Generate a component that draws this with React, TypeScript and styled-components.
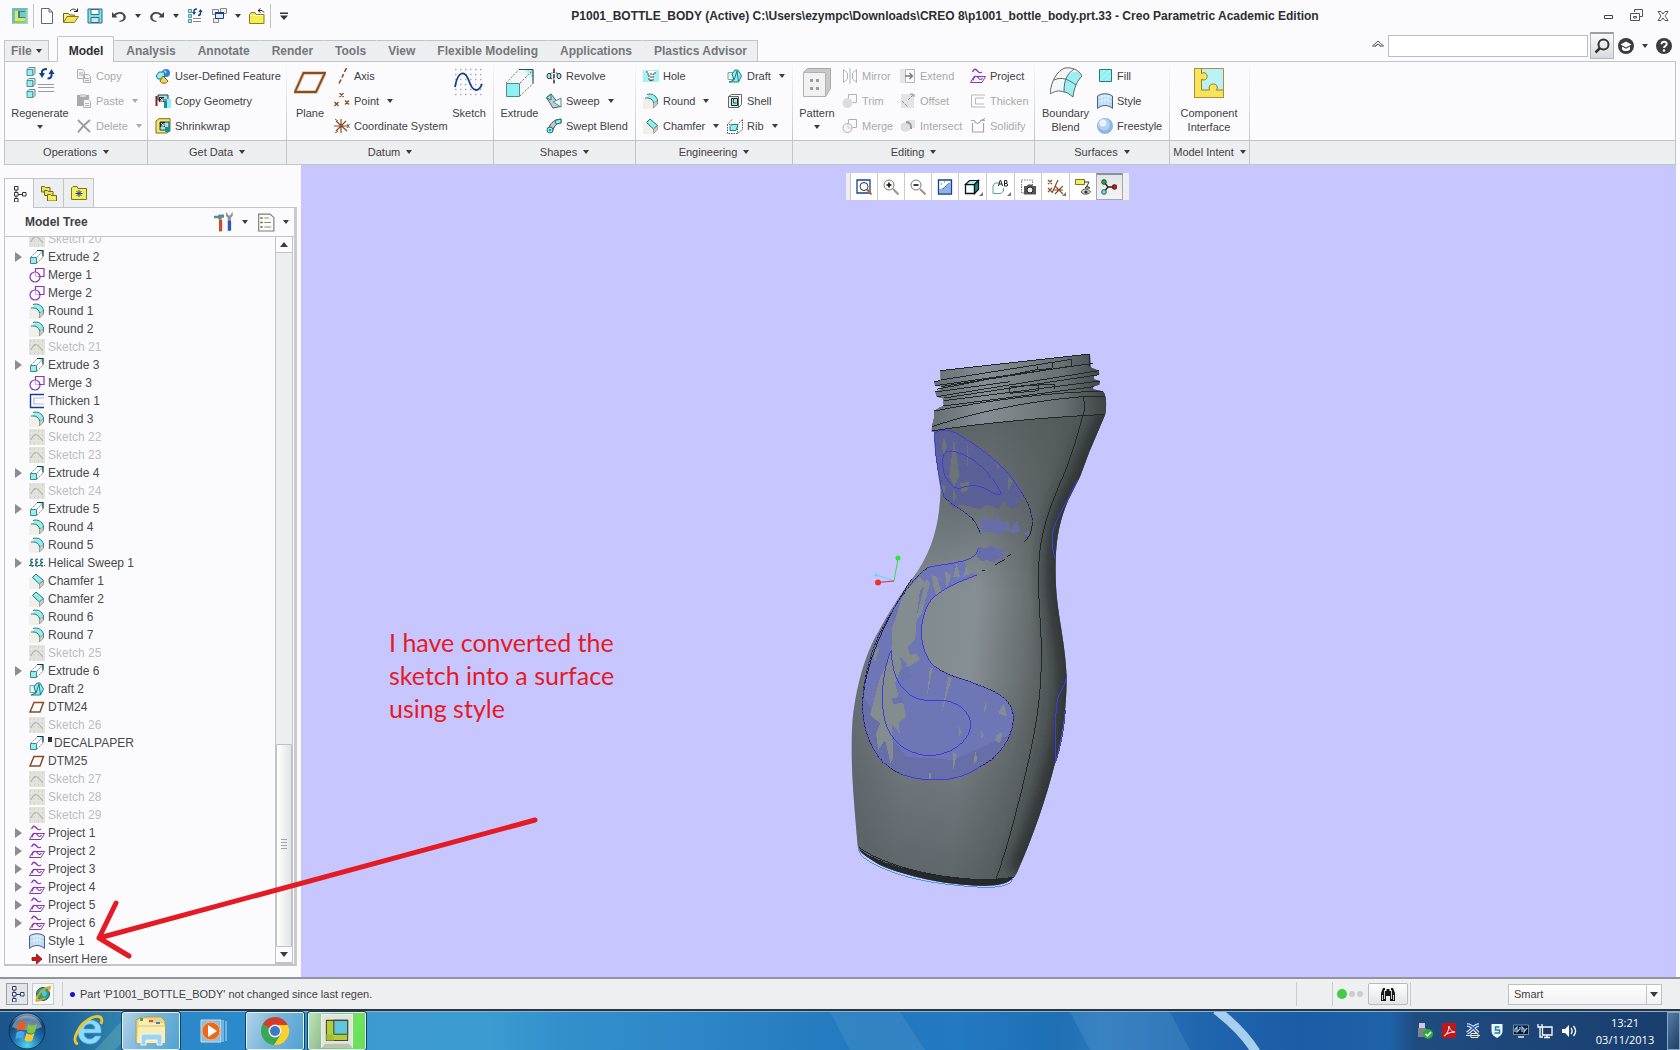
import React from "react";
import styled, { createGlobalStyle, css } from "styled-components";

const color = {
  chrome: "#fbfbfe",
  bar: "#edeef0",
  line: "#c3c4c9",
  text: "#3f4044",
  soft: "#74767b",
  off: "#a8a9ab",
  canvas: "#c8c6ff",
  note: "#e41b24",
};

const Global = createGlobalStyle`
  *, *::before, *::after { box-sizing: border-box; }
  html, body, #root { height: 100%; margin: 0; }
  body { font-family: "Liberation Sans", Arial, sans-serif; font-size: 11px; color: ${color.text}; background: ${color.chrome}; overflow: hidden; }
  button, input, select { font: inherit; color: inherit; margin: 0; padding: 0; border: 0; background: none; }
  svg { display: block; flex: none; }
  ul { list-style: none; margin: 0; padding: 0; }
`;

/* ---------- icon drawings, 16 x 16 unless noted ---------- */

const AQUA = "#8ff0f4";
const TEAL = "#1b7f80";
const BROWN = "#8a4b22";
const PURPLE = "#8b35b5";
const NAVY = "#14418c";

const icons: Record<string, React.ReactNode> = {
  creo: (
    <>
      <path d="M0 0h16v16H0z" fill="#9fd0e6" />
      <path d="M1 1h13v14H1z" fill="#8bcf5a" />
      <path d="M0 0h16L14 2H2v12L0 16z" fill="#6fb6d8" />
      <path d="M3 3h10v10H3z" fill="#d9e86a" />
      <path d="M6 3h7v7H6z" fill="#3f7f8f" />
      <path d="M8 4h5v5H8z" fill="#62cfe0" />
    </>
  ),
  page: <path d="M2.500 .500h7.500l3.500 3.500v11.500h-11zM10 .500v3.500h3.500" fill="#fff" stroke="#666" />,
  open: (
    <>
      <path d="M.500 14.500v-9h5l1 1.500h5v2" fill="#f5ee9a" stroke="#6c6420" />
      <path d="M.500 14.500 4 8.500h11.500l-4 6z" fill="#f3e45c" stroke="#8a7b22" />
      <path d="M7 3c2-2.500 5-2.500 7 0M14.500 .500V3.500H11" fill="none" stroke="#222" />
    </>
  ),
  save: (
    <>
      <path d="M1 1h14v14H1z" fill="#7be4e8" stroke="#2b6f86" />
      <path d="M4 1.500h8v5H4z" fill="#fff" stroke="#2b6f86" />
      <path d="M4 9.500h8v5H4z" fill="#d5e4e8" stroke="#2b6f86" />
    </>
  ),
  undo: <path d="M1 4v5.500h5.500L4.700 7.700C8 4 13 6 12.500 9.500c0 2-1.500 3-4 3.300V14c4-.3 6.300-2 6.300-4.700C14.800 4 7.500 2 3.200 6.200z" fill="#444549" />,
  redo: <path d="M15 4v5.500H9.500l1.800-1.800C8 4 3 6 3.500 9.500c0 2 1.500 3 4 3.300V14c-4-.3-6.300-2-6.300-4.700C1.200 4 8.500 2 12.800 6.200z" fill="#444549" />,
  regen: (
    <>
      <path d="M1.500 1.500h3v3h-3zM1.500 6.500h3v3h-3zM1.500 11.500h3v3h-3z" fill={AQUA} stroke="#58929a" />
      <path d="M6 10.500h8M6 13.500h8" stroke="#888" />
      <path d="M7 5V3c0-1 1-2 3-2M13.500 3v2c0 1.500-1 2.500-2.500 2.500" fill="none" stroke={NAVY} strokeWidth="1.500" />
      <path d="M5 4h4L7 7zM11.500 4h4l-2-3z" fill={NAVY} />
    </>
  ),
  windows: (
    <>
      <path d="M1.500 1.500h6v5h-6zM9.500 .500h6v5h-6zM2.500 10.500h5v4h-5z" fill="#eee" stroke="#888" />
      <path d="M4.500 4.500h8v6h-8z" fill="#dfeafc" stroke={NAVY} />
      <path d="M4 4h9v2H4z" fill={NAVY} />
    </>
  ),
  folderUp: (
    <>
      <path d="M.500 15.500v-9L2 4.500h4l1 2h8v9z" fill="#f6ee4e" stroke="#8a7f22" />
      <path d="M1.500 7.500h12" stroke="#fffbc0" />
      <path d="M9 2.500h4l2 2M11.500 .500 9 2.500l2.500 2" fill="none" stroke="#222" />
    </>
  ),
  more: <path d="M4 4.500h8v1.500H4zM4 7.500h8L8 12z" fill="#333" />,
  copy: <path d="M1.500 1.500h5l2 2v7h-7zM3 5h4M3 7h4M7.500 6.500h5l2 2v6h-7zM9 10.500h4M9 12.500h4" fill="#f4f4f4" stroke="#b0b0b0" />,
  paste: (
    <>
      <path d="M1 2h12v11H1z" fill="#a9a9a9" />
      <path d="M4 1h6v3H4z" fill="#d4d4d4" />
      <path d="M7.500 6.500h5l2 2v6h-7zM9 10.500h4M9 12.500h4" fill="#f4f4f4" stroke="#b0b0b0" />
    </>
  ),
  del: <path d="M2 2c3 3 8 8 12 12M14 2C9 6 5 10 2 14.500" fill="none" stroke="#9b9b9d" strokeWidth="1.800" />,
  udf: (
    <>
      <circle cx="11" cy="5" r="4" fill="#2f7fe0" />
      <circle cx="10" cy="4" r="1.500" fill="#a8d0ff" />
      <path d="M1 8 4 4h5l1 4-3 3H3z" fill={AQUA} stroke="#23707a" />
      <path d="m8 8 5 5c-1 3-7 3-8 0z" fill="#f2d35a" stroke="#7a6420" />
    </>
  ),
  copyGeom: (
    <>
      <path d="M1.500 3v10" stroke="#8b1f1f" strokeWidth="2" />
      <path d="M3 2h10v5H3z" fill={AQUA} stroke="#333" />
      <path d="M4 4h5v5H4z" fill="#222" />
      <path d="M5 5l3 3M8 5v3H5" stroke="#fff" fill="none" />
      <path d="M9 8h3v7H9z" fill="#1b8f95" />
      <path d="M12 6h4v9h-4z" fill={AQUA} />
    </>
  ),
  shrink: (
    <>
      <path d="M1 3 4 .700h11v12L12 15H1z" fill="#f3e86c" stroke="#7a6d1c" />
      <path d="M5 4h9v8H5z" fill={AQUA} stroke="#333" />
      <path d="M5 4h5v5H5z" fill="#222" />
      <path d="M6 5l3 3M9 5v3H6" stroke="#fff" fill="none" />
      <path d="M10 9h5v5h-5z" fill="#159097" />
    </>
  ),
  axis: <path d="M12.500 0 10.500 4M9.500 6 8 9.500M7 11.500 5 15.500" stroke={BROWN} strokeWidth="1.600" />,
  point: <path d="M5.500 0l4 4M9.500 0l-4 4M.500 9l4 4M4.500 9l-4 4M11 7.500l4 4M15 7.500l-4 4" stroke={BROWN} strokeWidth="1.300" />,
  csys: (
    <>
      <path d="M0 8h14M7 1v14M2 3l11 10M12 3 2 13" stroke={BROWN} strokeWidth="1.200" />
      <path d="M1 1l3 2M1 15l3-2M13 6l2.500 4M15.500 6 13 10" stroke="#666" />
    </>
  ),
  revolve: (
    <>
      <path d="M8 .500v15" stroke="#111" strokeWidth="1.300" strokeDasharray="4 1.500" />
      <ellipse cx="3" cy="8" rx="2" ry="2.700" fill={AQUA} stroke="#333" />
      <ellipse cx="13" cy="8" rx="2" ry="2.700" fill={AQUA} stroke="#333" />
      <path d="M4 6c2-2 6-2 8 0M4 10c2 1 3 1 4 0" fill="none" stroke="#333" strokeDasharray="2 1" />
    </>
  ),
  sweep: (
    <>
      <path d="M.500 4.500 5 1l10 12.500-8 1.500z" fill="#c7ced2" stroke="#555" />
      <path d="M.500 5 5 1v6z" fill={AQUA} stroke={TEAL} />
      <path d="M7 9 15 5v9z" fill="#e3f8f9" stroke="#4a8f95" />
    </>
  ),
  swept: (
    <>
      <path d="M2 12C4 6 6 4 10 2l5-1v4c-5 0-7 4-9 9z" fill="#bfc8cc" stroke="#444" />
      <path d="M9 2.500 15 1v4l-5 1z" fill={AQUA} stroke={TEAL} />
      <circle cx="4" cy="12" r="3" fill={AQUA} stroke="#1a6f70" />
      <circle cx="4" cy="12" r="1" fill="#1a6f70" />
    </>
  ),
  hole: (
    <>
      <path d="M0 2h16v12H0z" fill={AQUA} opacity=".8" />
      <path d="M3.500 3h9v3h-2.500v6H6V6H3.500z" fill="#fff" />
      <path d="M4 3v3h2v6.500h4V6h2V3M8 5v8" fill="none" stroke="#444" strokeDasharray="2 1" />
    </>
  ),
  round: (
    <>
      <path d="M0 5h6l5 5v6H0z" fill="#f0f0e8" />
      <path d="M5 2c4-1 8 1 9.500 5v4.500L10.500 15V9.500C9.500 7 8 5.500 4 5z" fill={AQUA} />
      <path d="M4 1.500c5-1.500 9 1 10.500 5.500v4M2 5c5-.5 8 1.500 8.500 5" fill="none" stroke="#2d6d70" />
      <path d="m10.500 15 4-4V7.500l-4 3z" fill="#cfcdbd" stroke="#777" strokeWidth=".600" />
    </>
  ),
  chamfer: (
    <>
      <path d="M0 5h5l5 6v5H0z" fill="#f0f0e8" />
      <path d="M3.500 4.500 7 1l7.500 6.500-4 3.500z" fill={AQUA} stroke="#2d6d70" />
      <path d="m10.500 15.500 4-4v-4l-4 3.500z" fill="#cfcdbd" stroke="#777" strokeWidth=".600" />
    </>
  ),
  draft: (
    <>
      <path d="M1 4.500h6v7H1z" fill="#e9f4f2" stroke="#7aa" />
      <path d="M5 6 8 2h3l3.500 6-3 6H2l5-2z" fill={AQUA} stroke="#217a80" />
      <path d="m7 12 3-9 1.500 11" fill="none" stroke="#217a80" />
    </>
  ),
  shell: (
    <>
      <path d="M1.500 3.500h10v11h-10z" fill="#e8eceb" stroke="#666" />
      <path d="M1.500 3.500l3-2h10v10l-3 3" fill="none" stroke="#666" />
      <path d="M4.500 5.500h6v7h-6z" fill={AQUA} stroke="#222" />
      <path d="M6.500 6v4h3" fill="none" stroke="#444" />
    </>
  ),
  rib: (
    <>
      <path d="M.500 6.500v9h10v-9zM.500 6.500 5 1.500M10.500 15.500l5-4v-10l-5 5" fill="none" stroke="#555" strokeDasharray="1.500 1" />
      <path d="M3 8.500l2-2h6l-2 6H3z" fill={AQUA} stroke="#217a80" />
    </>
  ),
  mirror: <path d="M8 0v16M1.500 1.500 5.500 5v6l-4 3.500zM14.500 1.500l-4 3.500v6l4 3.500z" fill="none" stroke="#b5b5b5" />,
  trim: (
    <>
      <path d="M6.500 1.500h8v8h-4M6.500 5V1.500" fill="none" stroke="#b5b5b5" />
      <circle cx="5.500" cy="10" r="5" fill="#dcdcdc" />
    </>
  ),
  mergeOff: (
    <>
      <path d="M6.500 1.500h8v8h-4M6.500 5V1.500" fill="none" stroke="#b0b0b0" />
      <circle cx="5.500" cy="10" r="4.500" fill="#f6f6f6" stroke="#b0b0b0" />
      <path d="M6 6v4h4" fill="none" stroke="#d0d0d0" />
    </>
  ),
  extend: (
    <>
      <path d="M0 1h5v14H0z" fill="#e6e6e6" />
      <path d="M5.500 1.500h9v13h-9z" fill="none" stroke="#b5b5b5" />
      <path d="M5 8h7M9.500 5l3 3-3 3" fill="none" stroke="#777" strokeWidth="1.300" />
    </>
  ),
  offset: (
    <>
      <path d="M1 1h13v14H1z" fill="#e3e3e3" />
      <path d="M2 8 8 14M8 7l6-6M10 1h4v4" fill="none" stroke="#8c8c8c" strokeDasharray="3 1" />
    </>
  ),
  intersect: (
    <>
      <path d="M7 2h8v8H7z" fill="#e3e3e3" />
      <circle cx="5.500" cy="9" r="5" fill="#dedede" />
      <path d="M6 4c4 0 5.500 3 5 7" fill="none" stroke="#999" strokeWidth="2" />
    </>
  ),
  project: (
    <>
      <path d="M2.500 4C4 .500 5.500 .500 7.500 3s3 2 4.500 1" fill="none" stroke={PURPLE} strokeWidth="1.300" />
      <path d="M4 8.500h11.500l-3.500 6H.500z" fill="none" stroke={PURPLE} />
      <path d="M3 12.500c1-5 4-5 5.500-2.500s3 1.500 4 0" fill="none" stroke={PURPLE} strokeWidth="1.200" />
    </>
  ),
  thickenOff: <path d="M15 2H1.500v12H15M14 5H5.500v6H14" fill="none" stroke="#b9b9b9" />,
  solidify: <path d="M1 2.500h3c2 4 5 4 7 0h4M11 2.500 15 .500M2.500 5v9h11V5" fill="none" stroke="#a5a5a5" strokeWidth="1.200" />,
  fill: (
    <>
      <path d="M2.500 1.500h12v12h-12z" fill={AQUA} stroke="#1e7e84" />
      <path d="M3 7l5-5M3 12 13 3M8 13l6-6" stroke="#d8fbfb" />
    </>
  ),
  style: (
    <>
      <path d="M1 3c4-3 9-3 14 0v12.500C11 11.500 5 11.500 1 15.500z" fill="#b7d9f5" />
      <path d="M5 1.500v10.800M8 1v11M11 1.500v11M2 5c4-3 8-3 12 0M2 9c4-3 8-3 12 0" stroke="#e6f3fd" fill="none" />
      <path d="M.500 3v12.500M15.500 3v12.500M.500 15.500c4-4 11-4 15 0M.500 3c4-3 11-3 15 0" fill="none" stroke="#4b6078" />
    </>
  ),
  freestyle: (
    <>
      <circle cx="8" cy="8" r="8" fill="#8db6e2" />
      <circle cx="7" cy="6.500" r="6" fill="#b4d1f0" />
      <circle cx="6" cy="5" r="3.500" fill="#e7f2fc" />
    </>
  ),
  extrudeSmall: (
    <>
      <path d="M1.500 8.500h6v6h-6z" fill={AQUA} stroke="#4b8388" />
      <path d="M2 8 8.500 1.500M8 8l6-6M8 14l6.500-6.500" fill="none" stroke="#8b8f92" strokeDasharray="2 1" />
      <path d="m10.500 2.500 3.500-.5v4z" fill="#8fdfe3" />
      <path d="M8 1.500h6v6" fill="none" stroke="#12393b" strokeWidth="1.200" />
    </>
  ),
  merge: (
    <>
      <path d="M6.500 5V1.500h8.500v8h-5" fill="none" stroke={PURPLE} strokeWidth="1.200" />
      <circle cx="6" cy="10" r="5" fill="none" stroke={PURPLE} strokeWidth="1.200" />
      <path d="M6.500 6v3.500H10" fill="none" stroke="#d2a9e6" />
    </>
  ),
  sketchOff: (
    <>
      <path d="M0 0h16v16H0z" fill="#e3e3dd" />
      <path d="M1 2h14M1 6h14M1 10h14M1 14h14" stroke="#c4c4bd" strokeDasharray="1 3" />
      <path d="M2 11c2-5 4-6 6-5 3 1 4 5 6 6" fill="none" stroke="#b4b4ac" strokeWidth="1.200" />
    </>
  ),
  thicken: (
    <>
      <path d="M15 1.500H1.500v13H15" fill="none" stroke={NAVY} strokeWidth="1.400" />
      <path d="M15 5H5v6h10" fill="none" stroke="#b9b5ee" strokeWidth="1.200" />
    </>
  ),
  helical: (
    <>
      <path d="M0 10.500h16" stroke="#176b66" strokeDasharray="2 1" />
      <path d="M4 4.500C1 3 1 8 4 7.500M4 7.500C1 7 1 12 4 11M9 4.500C6 3 6 8 9 7.500M9 7.500C6 7 6 12 9 11M14 4.500C11 3 11 8 14 7.500M14 7.500c-3-.5-3 4.500 0 3.500" fill="none" stroke="#176b66" strokeWidth="1.300" />
    </>
  ),
  datum: <path d="M5 3.500h9.500L11 13H1z" fill="none" stroke={BROWN} strokeWidth="1.500" />,
  insert: <path d="M3 6.500h4.500V3L13 8l-5.500 5V9.500H3z" fill="#d61616" stroke="#7e0d0d" strokeWidth=".800" />,
  treeTab: <path d="M3.500 .500h3.500v3.500H3.500zM3.500 6.500h3.500V10H3.500zM3.500 12.500h3.500V16H3.500zM11.500 6.500H15V10h-3.500zM5 4v2.500M5 10v2.500M7 8.500h4.500" fill="#fff" stroke="#333" />,
  layers: (
    <>
      <path d="M.500 7V1.500h3l1 1H9V7z" fill="#ece35c" stroke="#6f6821" />
      <path d="M3.500 10.500V5.500h3l1 1H12v4z" fill="#ece35c" stroke="#6f6821" />
      <path d="M6.500 16V9.500h3l1 1h5V16z" fill="#f7ef5a" stroke="#6f6821" />
    </>
  ),
  favs: (
    <>
      <path d="M.500 14.500V3l1.500-1.500h4l1 2h8.500v11z" fill="#f7ef5a" stroke="#7d7524" />
      <path d="M8 5v7M4.500 8.500h7M5.500 6l5 5M10.500 6l-5 5" stroke="#1f3f9b" />
    </>
  ),
  tools: (
    <>
      <path d="M0 3h3l1-1h4v2.500H6V6H3.500V5L0 5z" fill="#5d8a90" />
      <path d="M4 6h2.500v9.500H4z" fill="#d7491f" />
      <path d="M9.500 0v3l1.500 1.500v3h2.500v-3L15 3V0l-1.500 1.500v1h-2.500v-1z" fill="#8a9499" />
      <path d="M11 7h2.700v8H11z" fill="#2a5bb8" />
    </>
  ),
  listPage: (
    <>
      <path d="M1.500 .500h10l3.500 3v12H1.500z" fill="#fffef4" stroke="#777a7e" />
      <path d="M3 4h2M3 8h2M3 12h2" stroke="#555" strokeWidth="1.500" />
      <path d="M6.500 4h4M6.500 8h6M6.500 12h6" stroke="#888" />
    </>
  ),
  refit: (
    <>
      <path d="M1 1h13v13H1z" fill="#fff" stroke={NAVY} strokeWidth="1.300" />
      <circle cx="8" cy="7.500" r="4" fill="#f4fbff" stroke="#333" />
      <path d="m11 10.500 4.500 5" stroke="#a06a50" strokeWidth="2" />
    </>
  ),
  zoomIn: (
    <>
      <circle cx="6" cy="6" r="5" fill="#fff" stroke="#777" />
      <path d="M6 3.500v5M3.500 6h5" stroke="#111" strokeWidth="1.600" />
      <path d="m10 10 5.500 5.500" stroke="#b98b70" strokeWidth="2" />
    </>
  ),
  zoomOut: (
    <>
      <circle cx="6" cy="6" r="5" fill="#fff" stroke="#777" />
      <path d="M3.500 6h5" stroke="#111" strokeWidth="1.600" />
      <path d="m10 10 5.500 5.500" stroke="#b98b70" strokeWidth="2" />
    </>
  ),
  repaint: (
    <>
      <path d="M1.500 1h13v14h-13z" fill="#fff" stroke={NAVY} strokeWidth="1.300" />
      <path d="M2 14V10c5 0 8-4 12-8v12z" fill="#8fb1e6" />
      <path d="m6 10 6-6M4 5h1M7 3h1" stroke="#2c5dab" strokeDasharray="2 1" />
    </>
  ),
  cube: (
    <>
      <path d="M1.500 5.500h9v9h-9z" fill="#f4ffff" stroke="#111" strokeWidth="1.300" />
      <path d="m1.500 5.500 4-4h9l-4 4z" fill="#a5ebec" stroke="#111" strokeWidth="1.200" />
      <path d="m10.500 14.500 4-4v-9l-4 4z" fill="#1b8386" stroke="#111" strokeWidth="1.200" />
    </>
  ),
  views: (
    <>
      <path d="M1 14.500V7l2-3h4M1 14.500h8L11.500 12V9" fill="none" stroke="#4aaab0" />
      <path d="m6.500 7 1.500-5.500h.8L10.500 7M7 5h3M12.500 1.500V7h2.500l.7-1-.7-1.500h-2.500M12.500 1.500h2l.6 1.500-.6 1.500" fill="none" stroke="#222" />
    </>
  ),
  camera: (
    <>
      <path d="M1.500 1h11v13h-11z" fill="#fff" stroke="#777" strokeDasharray="1.500 1" />
      <path d="M4 7h3l1-1.500h4L13 7h3v8.500H4z" fill="#555" />
      <circle cx="10" cy="11" r="3" fill="#eee" stroke="#222" />
    </>
  ),
  datumDisp: (
    <path d="M1 1l4 4M5 1 1 5M11 1 5 14M1 9l4 4M5 9l-4 4M8 7l8 8M16 7l-8 8M7 11h9" fill="none" stroke={BROWN} strokeWidth="1.200" />
  ),
  annot: (
    <>
      <path d="M.500 .500h9v5h-9z" fill="#f5ee63" stroke="#7b751f" />
      <path d="M9 3h5l-2 4 3 2h-5l2-2" fill="none" stroke="#333" />
      <path d="M6 13c2-4 7-4 9.500 0-3 3-7 3-9.500 0z" fill="#c5ccd1" stroke="#555" />
      <circle cx="11" cy="13" r="1.600" fill="#333" />
    </>
  ),
  spin: (
    <>
      <path d="M3 3l4 5 7 0M7 8l-4 5" fill="none" stroke="#222" strokeWidth="1.300" />
      <circle cx="3" cy="3" r="2.400" fill="#14b32a" stroke="#111" strokeWidth=".600" />
      <circle cx="3" cy="13" r="2.400" fill="#57e0dc" stroke="#111" strokeWidth=".600" />
      <circle cx="13.500" cy="8" r="2.400" fill="#c41616" stroke="#111" strokeWidth=".600" />
    </>
  ),
  treeStatus: <path d="M3.500 .500H7V4H3.500zM3.500 6.500H7V10H3.500zM3.500 12.500H7V16H3.500zM11.500 6.500H15V10h-3.500zM5 4v2.500M5 10v2.500M7 8.500h4.500" fill="#fff" stroke="#223a66" />,
  globe: (
    <>
      <circle cx="8" cy="8" r="6.500" fill="#2fa06d" stroke="#135a8c" />
      <path d="M4 5c2 0 3 1 3 3s2 3 4 2l1-3-3-4z" fill="#4ec3ef" />
      <path d="M1 15C3 7 8 2 15 1c0 2-1 3-2 4M1 15c3 0 6-1 9-3" fill="none" stroke="#d9a520" strokeWidth="1.800" />
    </>
  ),
  binoculars: (
    <>
      <path d="M1 15V7l2-5h2v3h1.500V3h3v2H11V2h2l2 5v8h-5v-5H6v5z" fill="#161616" />
      <path d="M4.500 4v9M11.500 4v9M2.500 9v5M13.500 9v5" stroke="#e4e4e4" strokeWidth=".900" />
    </>
  ),
  minimize: <path d="M3.500 7.500h8v3h-8z" fill="#fff" stroke="#444" />,
  restore: <path d="M6.500 1.500h8v7h-3M6.500 4V1.500M2.500 5.500h9v7h-9zM5.500 8.500h3v1.500h-3z" fill="none" stroke="#555" />,
  close: <path d="M3 3.500h3l2 2.500 2-2.500h3L10 8l3 4.500h-3L8 10l-2 2.500H3L6 8z" fill="#fff" stroke="#555" />,
  collapse: <path d="M2.500 8 8 3l5.500 5h-3L8 6 5.500 8zM5 8.500 8 6l3 2.500" fill="#fff" stroke="#555" />,
  search: (
    <>
      <circle cx="9.500" cy="6.500" r="5" fill="none" stroke="#333" strokeWidth="2" />
      <path d="m6 10-4.500 4.500" stroke="#333" strokeWidth="2.500" />
    </>
  ),
  learn: (
    <>
      <circle cx="8" cy="8" r="8" fill="#3b3c40" />
      <path d="M2.500 6.500 8 3.500l5.500 3L8 9.500zM4 8.500v3c2 2 6 2 8 0v-3l-4 2.300z" fill="#fff" />
    </>
  ),
  help: (
    <>
      <circle cx="8" cy="8" r="8" fill="#3b3c40" />
      <path d="M5.500 6.200C5.500 2.800 11 3 10.700 6.200 10.600 8 8 8 8 10" fill="none" stroke="#fff" strokeWidth="2" />
      <circle cx="8" cy="12.500" r="1.300" fill="#fff" />
    </>
  ),
  usb: (
    <>
      <path d="M2 0h6v5H2z" fill="#c9ced4" />
      <path d="M1 5h8v9H1z" fill="#7c838c" />
      <circle cx="11" cy="11" r="5" fill="#2fa83c" />
      <path d="m8.500 11 2 2 3.500-4" fill="none" stroke="#fff" strokeWidth="1.500" />
    </>
  ),
  pdf: (
    <>
      <path d="M1 0h14v15H1z" fill="#c3161c" />
      <path d="M3 13c3-2 5-6 5-10 1 4 3 6 6 6-4 0-8 1-11 4z" fill="none" stroke="#fff" />
    </>
  ),
  xTray: (
    <>
      <path d="M2 2c5 0 7 4 11 8M14 2C9 2 8 7 2 10" fill="none" stroke="#eaf2ff" strokeWidth="3.500" />
      <path d="M2 2c5 0 7 4 11 8M14 2C9 2 8 7 2 10" fill="none" stroke="#2c5fb0" strokeWidth="1.500" />
      <path d="M1 12.500h14M6 10.500h7v4H6z" fill="#444" stroke="#e5e5e5" />
    </>
  ),
  shield: (
    <>
      <path d="M2.500 1h11v7c0 3-2 5-5.500 7-3.500-2-5.500-4-5.500-7z" fill="#eaf7fb" />
      <path d="M10.500 4h-4v3h4v3h-5" fill="none" stroke="#1b7fae" strokeWidth="1.500" />
    </>
  ),
  display: (
    <>
      <path d="M.500 2h15v9.500H.500z" fill="#10151d" stroke="#9fb4cf" strokeWidth=".700" />
      <path d="M2 9V6l2-2v5l3-3v-2M9 9V4l2 2v3l3-4" fill="none" stroke="#8cc4ff" strokeWidth="1.300" />
      <path d="M5 13h6v2H5z" fill="#b9c3d0" />
    </>
  ),
  network: (
    <>
      <path d="M5.500 4h9.500v8H5.500z" fill="#173a66" stroke="#fff" strokeWidth="1.300" />
      <path d="M7 14.500h6M10 12v2M1 1v3h4V1M3 4v10h3" fill="none" stroke="#fff" strokeWidth="1.300" />
    </>
  ),
  volume: (
    <>
      <path d="M1 6h3l4-4v12L4 10H1z" fill="#fff" />
      <path d="M10 5c1.500 2 1.500 4 0 6M12.500 3c2.500 3 2.500 7 0 10" fill="none" stroke="#fff" strokeWidth="1.300" />
    </>
  ),
};

const bigIcons: Record<string, React.ReactNode> = {
  regenerate: (
    <>
      {[0, 11, 22].map((y) => (
        <g key={y}>
          <path d={`M3 ${y + 2.5}h6v6H3z`} fill={AQUA} stroke="#5b8c90" />
          <path d={`M3 ${y + 2.5}l2-2h6v6l-2 2v-6z`} fill="#d9f3f4" stroke="#5b8c90" />
        </g>
      ))}
      <path d="M14 17.500h16M14 20.500h16M14 24.500h16" stroke="#9a9a9a" />
      <path d="M18 8V5c0-2 2-3 5-3M27.500 5v3c0 2-1.500 3.500-4 3.500" fill="none" stroke={NAVY} strokeWidth="2" />
      <path d="M15 6h6l-3 5zM24.500 7h6l-3-5z" fill={NAVY} />
    </>
  ),
  plane: (
    <>
      <path d="M9.500 6h21.500l-9 19H1z" fill="none" stroke="#d9c09a" strokeWidth="3.500" />
      <path d="M9.500 6h21.500l-9 19H1z" fill="none" stroke={BROWN} strokeWidth="1.800" />
    </>
  ),
  sketch: (
    <>
      {[2, 7, 12, 17, 22, 27].map((y) => (
        <path key={y} d={`M2 ${y + 0.5}h28`} stroke="#a8acb2" strokeWidth="1.500" strokeDasharray="1.500 3.500" />
      ))}
      <path d="M2 20C5 3 12 3 16 14c4 12 10 11 13 3" fill="none" stroke={NAVY} strokeWidth="1.800" />
    </>
  ),
  extrude: (
    <>
      <path d="M19 3h10v10z" fill="#9eeef0" />
      <path d="M15 3h8l6 8v6L16 29V16H3z" fill="#eef7f7" opacity=".6" />
      <path d="M2 16 15 2.500h14v14L16 29M16 16 29 3" fill="none" stroke="#777" strokeDasharray="2 1.500" />
      <path d="M15 2.500h14v14" fill="none" stroke="#444" />
      <path d="M2.500 16.500h13v13h-13z" fill={AQUA} stroke="#5a8487" />
    </>
  ),
  pattern: (
    <>
      <path d="m2.500 5.500 4-4h23v20l-5 8z" fill="#c9c9ca" stroke="#a8a8a8" />
      <path d="M2.500 5.500h22v24h-22z" fill="#f1f1f1" stroke="#b0b0b0" />
      <path d="M9 12h3v3H9zM15 12h3v3h-3zM9 20h3v3H9zM15 20h3v3h-3z" fill="#9c9c9c" />
    </>
  ),
  boundary: (
    <>
      <path d="M0 27C1 14 7 4 15 1h9c4 2 7 5 8 8-5 5-8 12-9 21-4-3-6-5-9-5-5-2-9-1-14 2z" fill="#f1f6f6" />
      <path d="M15 12c3-5 8-8 14-7l3 4c-5 5-8 12-9 21-4-3-6-5-9-5 0-5 0-9 1-13z" fill="#99eff1" />
      <path d="M0 27C1 14 7 4 15 1c7-1 14 2 17 8-5 5-8 12-9 21-4-3-6-5-9-5-5-2-9-1-14 2zM14 25c0-12 3-18 10-23M4 13c8-4 15 0 22 5" fill="none" stroke="#666" />
    </>
  ),
  component: (
    <>
      <path d="M1.500 1.500h29v29h-29z" fill="#b9f3f5" />
      <path d="M1.500 1.500h7v5c7-4 8 9 0 6V23h8c-3-8 11-8 7 0h7v7.500h-29z" fill="#f5e45c" stroke="#9a7a1c" />
      <path d="M1.500 1.500h29v29h-29z" fill="none" stroke="#b58d3a" />
    </>
  ),
};

const Icon = ({ name }: { name: string }) => (
  <svg width="16" height="16" viewBox="0 0 16 16" aria-hidden="true">
    {icons[name]}
  </svg>
);
const BigIcon = ({ name }: { name: string }) => (
  <svg width="32" height="32" viewBox="0 0 32 32" aria-hidden="true">
    {bigIcons[name]}
  </svg>
);

const Caret = styled.span<{ $off?: boolean }>`
  display: inline-block;
  flex: none;
  width: 0;
  height: 0;
  border: 3px solid transparent;
  border-top: 4px solid ${(p) => (p.$off ? color.off : "#3a3b3f")};
  border-bottom: 0;
`;

/* ---------- window chrome ---------- */

const Window = styled.div`
  display: flex;
  flex-direction: column;
  height: 100vh;
  position: relative;
`;
const TitleBar = styled.header`
  display: flex;
  align-items: center;
  height: 32px;
`;
const QuickBar = styled.div`
  display: flex;
  align-items: center;
  width: 296px;
  padding-left: 8px;
`;
const QuickButton = styled.button<{ $narrow?: boolean }>`
  display: flex;
  align-items: center;
  justify-content: center;
  width: ${(p) => (p.$narrow ? 14 : 24)}px;
  height: 24px;
`;
const QuickRule = styled.i`
  width: 1px;
  height: 24px;
  margin: 0 1px;
  background: ${color.line};
`;
const Title = styled.h1`
  flex: 1;
  margin: 0;
  text-align: center;
  font-size: 12px;
  font-weight: bold;
  color: #2c2d30;
  white-space: nowrap;
`;
const WindowButtons = styled.div`
  display: flex;
  gap: 11px;
  width: 86px;
  padding-left: 7px;
  button { width: 16px; }
`;
const TabRow = styled.nav`
  display: flex;
  align-items: flex-end;
  height: 29px;
  padding: 0 8px 0 4px;
`;
const Tab = styled.button<{ $active?: boolean }>`
  height: 21px;
  padding: 0 10px 0 11px;
  border: 1px solid ${color.line};
  border-bottom: 0;
  border-left-color: ${color.bar};
  border-right-width: 0;
  background: ${color.bar};
  font-size: 12px;
  font-weight: bold;
  color: ${color.soft};
  white-space: nowrap;
  &:last-of-type { border-right-width: 1px; }
  ${(p) =>
    p.$active &&
    css`
      height: 26px;
      margin-bottom: -1px;
      padding-top: 3px;
      border-left-color: ${color.line};
      border-right-width: 1px;
      border-radius: 2px 2px 0 0;
      background: ${color.chrome};
      color: #2f3033;
      position: relative;
    `}
`;
const FileTab = styled(Tab)`
  display: flex;
  align-items: center;
  gap: 4px;
  padding: 0 6px;
  margin-right: 8px;
  border-left-color: ${color.line};
  border-right-width: 1px;
`;
const Tabs = styled.div`
  display: flex;
  flex: 1;
  align-items: flex-end;
`;
const SearchArea = styled.form`
  display: flex;
  align-items: center;
  height: 27px;
  margin-bottom: 2px;
  gap: 2px;
`;
const SearchInput = styled.input`
  width: 200px;
  height: 22px;
  padding: 0 4px;
  border: 1px solid #bdbec3;
  background: #fff;
`;
const SearchButton = styled.button`
  display: flex;
  align-items: center;
  justify-content: center;
  width: 24px;
  height: 27px;
  margin-right: 2px;
  border: 1px solid #b4b5ba;
  border-top: 2px solid #9c9da3;
  background: linear-gradient(#fafafa, #d9dadf);
`;
const PlainButton = styled.button<{ $w?: number }>`
  display: flex;
  align-items: center;
  justify-content: center;
  width: ${(p) => p.$w ?? 16}px;
`;

/* ---------- ribbon ---------- */

const Ribbon = styled.section`
  display: flex;
  margin: 0 4px;
  height: 104px;
  border: 1px solid ${color.line};
  background: linear-gradient(${color.chrome} 78px, ${color.line} 78px, ${color.line} 79px, ${color.bar} 79px);
`;
const Group = styled.div<{ $w: number }>`
  display: flex;
  flex-direction: column;
  flex: none;
  width: ${(p) => p.$w}px;
  border-right: 1px solid;
  border-image: linear-gradient(${color.chrome}, ${color.line} 80%) 1;
`;
const GroupBody = styled.div`
  display: flex;
  height: 79px;
  padding: 1px 0 0 3px;
`;
const GroupLabel = styled.button`
  display: flex;
  flex: 1;
  align-items: center;
  justify-content: center;
  gap: 6px;
  padding-bottom: 2px;
  white-space: nowrap;
`;
const BigButton = styled.button<{ $w: number }>`
  display: flex;
  flex-direction: column;
  flex: none;
  align-items: center;
  width: ${(p) => p.$w}px;
  padding-top: 4px;
  line-height: 14px;
  span.label { margin-top: 7px; }
  i { margin-top: 5px; }
`;
const Column = styled.div<{ $w?: number }>`
  flex: none;
  width: ${(p) => (p.$w ? p.$w + "px" : "auto")};
  padding-left: 4px;
`;
const Command = styled.button`
  display: flex;
  align-items: center;
  gap: 4px;
  height: 25px;
  white-space: nowrap;
  &:disabled { color: ${color.off}; }
  i { margin-left: 4px; }
`;

type Cmd = { icon: string; label: string; menu?: boolean; off?: boolean };
type Part = { big: string; label: string[]; w: number; menu?: boolean } | { col: Cmd[]; w?: number };
type GroupSpec = { name: string; w: number; parts: Part[] };

const groups: GroupSpec[] = [
  {
    name: "Operations", w: 143,
    parts: [
      { big: "regenerate", label: ["Regenerate"], w: 64, menu: true },
      { col: [{ icon: "copy", label: "Copy", off: true }, { icon: "paste", label: "Paste", menu: true, off: true }, { icon: "del", label: "Delete", menu: true, off: true }] },
    ],
  },
  {
    name: "Get Data", w: 139,
    parts: [{ col: [{ icon: "udf", label: "User-Defined Feature" }, { icon: "copyGeom", label: "Copy Geometry" }, { icon: "shrink", label: "Shrinkwrap" }] }],
  },
  {
    name: "Datum", w: 207,
    parts: [
      { big: "plane", label: ["Plane"], w: 40 },
      { w: 118, col: [{ icon: "axis", label: "Axis" }, { icon: "point", label: "Point", menu: true }, { icon: "csys", label: "Coordinate System" }] },
      { big: "sketch", label: ["Sketch"], w: 42 },
    ],
  },
  {
    name: "Shapes", w: 142,
    parts: [
      { big: "extrude", label: ["Extrude"], w: 45 },
      { col: [{ icon: "revolve", label: "Revolve" }, { icon: "sweep", label: "Sweep", menu: true }, { icon: "swept", label: "Swept Blend" }] },
    ],
  },
  {
    name: "Engineering", w: 157,
    parts: [
      { w: 84, col: [{ icon: "hole", label: "Hole" }, { icon: "round", label: "Round", menu: true }, { icon: "chamfer", label: "Chamfer", menu: true }] },
      { col: [{ icon: "draft", label: "Draft", menu: true }, { icon: "shell", label: "Shell" }, { icon: "rib", label: "Rib", menu: true }] },
    ],
  },
  {
    name: "Editing", w: 242,
    parts: [
      { big: "pattern", label: ["Pattern"], w: 42, menu: true },
      { w: 58, col: [{ icon: "mirror", label: "Mirror", off: true }, { icon: "trim", label: "Trim", off: true }, { icon: "mergeOff", label: "Merge", off: true }] },
      { w: 70, col: [{ icon: "extend", label: "Extend", off: true }, { icon: "offset", label: "Offset", off: true }, { icon: "intersect", label: "Intersect", off: true }] },
      { col: [{ icon: "project", label: "Project" }, { icon: "thickenOff", label: "Thicken", off: true }, { icon: "solidify", label: "Solidify", off: true }] },
    ],
  },
  {
    name: "Surfaces", w: 135,
    parts: [
      { big: "boundary", label: ["Boundary", "Blend"], w: 55 },
      { col: [{ icon: "fill", label: "Fill" }, { icon: "style", label: "Style" }, { icon: "freestyle", label: "Freestyle" }] },
    ],
  },
  { name: "Model Intent", w: 80, parts: [{ big: "component", label: ["Component", "Interface"], w: 72 }] },
];

const RibbonGroup = ({ spec }: { spec: GroupSpec }) => (
  <Group $w={spec.w}>
    <GroupBody>
      {spec.parts.map((part, i) =>
        "big" in part ? (
          <BigButton key={i} $w={part.w}>
            <BigIcon name={part.big} />
            <span className="label">
              {part.label.map((l, n) => (
                <React.Fragment key={l}>
                  {n > 0 && <br />}
                  {l}
                </React.Fragment>
              ))}
            </span>
            {part.menu && <Caret as="i" />}
          </BigButton>
        ) : (
          <Column key={i} $w={part.w}>
            {part.col.map((c) => (
              <Command key={c.label} disabled={c.off}>
                <Icon name={c.icon} />
                {c.label}
                {c.menu && <Caret as="i" $off={c.off} />}
              </Command>
            ))}
          </Column>
        ),
      )}
    </GroupBody>
    <GroupLabel>
      {spec.name}
      <Caret />
    </GroupLabel>
  </Group>
);

/* ---------- model tree ---------- */

const Workspace = styled.main`
  display: flex;
  flex: 1;
  min-height: 0;
  padding-right: 4px;
`;
const Sidebar = styled.aside`
  display: flex;
  flex-direction: column;
  flex: none;
  width: 301px;
  padding: 13px 4px 11px 4px;
`;
const PanelTabs = styled.div`
  display: flex;
  height: 29px;
`;
const PanelTab = styled.button<{ $active?: boolean }>`
  display: flex;
  align-items: center;
  justify-content: center;
  width: 30px;
  height: ${(p) => (p.$active ? 30 : 29)}px;
  border: 1px solid ${color.line};
  border-left-width: ${(p) => (p.$active ? 1 : 0)}px;
  border-bottom: 0;
  background: ${(p) => (p.$active ? color.chrome : color.bar)};
  position: relative;
`;
const Panel = styled.section`
  display: flex;
  flex-direction: column;
  flex: 1;
  min-height: 0;
  border: 1px solid ${color.line};
  border-right: 3px solid #c9cacd;
  border-bottom-width: 2px;
`;
const PanelHead = styled.div`
  display: flex;
  align-items: center;
  height: 29px;
  padding-left: 20px;
  border-bottom: 1px solid ${color.line};
  h2 { flex: 1; margin: 0; font-size: 12px; }
`;
const TreeArea = styled.div`
  display: flex;
  flex: 1;
  min-height: 0;
`;
const TreeClip = styled.div`
  flex: 1;
  overflow: hidden;
`;
const TreeList = styled.ul`
  margin-top: -7px;
`;
const TreeRow = styled.li<{ $off?: boolean }>`
  display: flex;
  align-items: center;
  height: 18px;
  padding-left: 10px;
  font-size: 12px;
  white-space: nowrap;
  color: ${(p) => (p.$off ? "#bcbdbf" : "#47484c")};
  span { margin-left: 3px; }
`;
const Expander = styled.button<{ $open: boolean }>`
  width: 14px;
  height: 10px;
  &::before {
    content: "";
    display: ${(p) => (p.$open ? "block" : "none")};
    width: 0;
    border: 5px solid transparent;
    border-left: 7px solid #8b8c8f;
    border-right: 0;
  }
`;
const Marker = styled.i`
  align-self: flex-start;
  width: 4px;
  height: 5px;
  margin: 3px 0 0 3px;
  background: #333;
  & + span { margin-left: 2px; }
`;
const ScrollTrack = styled.div`
  display: flex;
  flex-direction: column;
  width: 18px;
  margin-right: 1px;
  border: 1px solid ${color.line};
  border-top: 0;
  background: ${color.bar};
`;
const ScrollButton = styled.button<{ $down?: boolean }>`
  display: flex;
  align-items: center;
  justify-content: center;
  height: 16px;
  border-bottom: 1px solid ${color.line};
  background: ${color.chrome};
  i { transform: ${(p) => (p.$down ? "none" : "rotate(180deg)")}; border-width: 5px 4px 0; }
`;
const ScrollThumb = styled.div`
  display: flex;
  align-items: center;
  justify-content: center;
  height: 28%;
  margin-top: auto;
  border: 1px solid #c0c1c6;
  border-radius: 1px;
  background: linear-gradient(90deg, #fff, #e2e3e7);
  i { width: 6px; height: 12px; background: repeating-linear-gradient(#a3a4aa 0 1px, transparent 1px 3px); }
`;

type Node = [icon: string, label: string];
const kinds: Record<string, string> = {
  Sketch: "sketchOff", Extrude: "extrudeSmall", Merge: "merge", Round: "round", Thicken: "thicken",
  Helical: "helical", Chamfer: "chamfer", Draft: "draft", DTM24: "datum", DTM25: "datum",
  DECALPAPER: "extrudeSmall", Project: "project", Style: "style", Insert: "insert",
};
const tree: Node[] = [
  "Sketch 20", "Extrude 2", "Merge 1", "Merge 2", "Round 1", "Round 2", "Sketch 21", "Extrude 3", "Merge 3",
  "Thicken 1", "Round 3", "Sketch 22", "Sketch 23", "Extrude 4", "Sketch 24", "Extrude 5", "Round 4", "Round 5",
  "Helical Sweep 1", "Chamfer 1", "Chamfer 2", "Round 6", "Round 7", "Sketch 25", "Extrude 6", "Draft 2", "DTM24",
  "Sketch 26", "DECALPAPER", "DTM25", "Sketch 27", "Sketch 28", "Sketch 29", "Project 1", "Project 2", "Project 3",
  "Project 4", "Project 5", "Project 6", "Style 1", "Insert Here",
].map((label) => [kinds[label.split(" ")[0]], label]);

const ModelTree = () => (
  <Sidebar>
    <PanelTabs>
      <PanelTab $active aria-label="Model Tree"><Icon name="treeTab" /></PanelTab>
      <PanelTab aria-label="Folder Browser"><Icon name="layers" /></PanelTab>
      <PanelTab aria-label="Favorites"><Icon name="favs" /></PanelTab>
    </PanelTabs>
    <Panel>
      <PanelHead>
        <h2>Model Tree</h2>
        <PlainButton $w={24} aria-label="Settings">
          <svg width="20" height="20" viewBox="0 0 16 16">{icons.tools}</svg>
        </PlainButton>
        <PlainButton $w={18} aria-label="Settings menu"><Caret /></PlainButton>
        <PlainButton $w={24} aria-label="Show">
          <svg width="18" height="19" viewBox="0 0 16 16">{icons.listPage}</svg>
        </PlainButton>
        <PlainButton aria-label="Show menu"><Caret /></PlainButton>
      </PanelHead>
      <TreeArea>
        <TreeClip>
          <TreeList>
            {tree.map(([icon, label]) => (
              <TreeRow key={label} $off={icon === "sketchOff"}>
                <Expander
                  $open={/^(Extrude|Helical|Project)/.test(label)}
                  aria-label={"Expand " + label}
                />
                <Icon name={icon} />
                {label === "DECALPAPER" && <Marker />}
                <span>{label}</span>
              </TreeRow>
            ))}
          </TreeList>
        </TreeClip>
        <ScrollTrack>
          <ScrollButton aria-label="Scroll up"><Caret as="i" /></ScrollButton>
          <ScrollThumb><i /></ScrollThumb>
          <ScrollButton $down aria-label="Scroll down"><Caret as="i" /></ScrollButton>
        </ScrollTrack>
      </TreeArea>
    </Panel>
  </Sidebar>
);

/* ---------- graphics area ---------- */

const Viewport = styled.section`
  display: flex;
  flex-direction: column;
  align-items: center;
  flex: 1;
  min-width: 0;
  padding-top: 8px;
  background: ${color.canvas};
  position: relative;
`;
const Scene = styled.svg`
  position: absolute;
  inset: 0;
  width: 100%;
  height: 100%;
`;
const ViewBar = styled.div`
  display: flex;
  height: 27px;
  padding: 0 6px 0 4px;
  background: ${color.bar};
  position: relative;
  margin-right: 3px;
`;
const ViewButton = styled.button<{ $on?: boolean; $menu?: boolean }>`
  display: flex;
  align-items: center;
  justify-content: center;
  width: ${(p) => (p.$menu ? 28 : 27)}px;
  border-left: 1px solid #c9cad0;
  background: #fff;
  position: relative;
  ${(p) =>
    p.$menu &&
    css`
      &::after {
        content: "";
        position: absolute;
        right: 3px;
        bottom: 4px;
        border: 2px solid #777;
        border-top-color: transparent;
        border-left-color: transparent;
      }
    `}
  ${(p) =>
    p.$on &&
    css`
      border: 1px solid #a7a8ad;
      border-top: 2px solid #8e8f95;
      background: linear-gradient(#e3e4e7, #f4f4f6);
    `}
`;
const Note = styled.p`
  position: absolute;
  left: 88px;
  top: 461px;
  width: 260px;
  margin: 0;
  font-family: Lato, "Open Sans", sans-serif;
  font-size: 25px;
  line-height: 33px;
  color: ${color.note};
`;
const Markup = styled.svg`
  position: absolute;
  left: 0;
  top: 0;
  width: 100%;
  height: 100%;
  pointer-events: none;
`;

const outline =
  "M360 122L810 72L812 112L836 122L838 132L822 138V148L840 153L838 164L818 170L820 178L848 184C858 190 862 225 855 255L808 365L780 440L745 510C715 580 705 640 707 740C709 850 735 920 740 1040C740 1160 720 1250 705 1300C680 1400 640 1520 590 1630C570 1668 520 1668 480 1667C380 1665 260 1640 180 1605C130 1575 115 1565 113 1545C100 1400 90 1280 97 1180C105 1080 135 970 175 905C205 850 240 795 275 748C335 670 358 590 362 480C350 400 342 350 342 305L335 305L336 288L342 265L343 243L360 232L372 228L368 204L350 200L346 186L362 178L365 170L345 165L342 156L362 150Z";
const rightEdge =
  "M870 230L808 365L780 440L745 510C715 580 705 640 707 740C709 850 735 920 740 1040C740 1160 720 1250 705 1300C680 1400 640 1520 590 1630";
const seam =
  "M790 200C796 230 794 245 788 258C760 360 740 420 720 460C670 580 655 640 655 760C658 850 664 900 664 970C664 1100 650 1200 600 1400C575 1500 550 1590 525 1655";
const upperDecal =
  "M345 310C355 298 385 298 410 310C470 345 530 390 570 435C585 452 600 475 610 495L592 530 570 535 552 512 535 538 520 530 500 524 480 538 450 530 425 522 400 535 372 500C350 420 343 350 345 310Z";
const lowerDecal =
  "M480 732C440 745 380 770 350 795C325 815 310 850 305 890C302 930 310 980 345 1010C390 1042 430 1045 480 1067C530 1085 578 1110 580 1160C580 1220 540 1280 480 1310C420 1355 330 1360 250 1335C180 1310 128 1230 128 1130C128 1060 145 980 180 910C210 850 270 750 320 715C360 705 400 702 430 692L450 730Z";

const Bottle = () => (
  <Scene viewBox="301 165 1375 812" role="img" aria-label="Bottle body model">
    <defs>
      <linearGradient id="skin" gradientUnits="userSpaceOnUse" x1="90" y1="800" x2="700" y2="860">
        <stop offset="0" stopColor="#62696e" />
        <stop offset=".35" stopColor="#808a8f" />
        <stop offset=".62" stopColor="#868f94" />
        <stop offset=".9" stopColor="#666c6f" />
        <stop offset="1" stopColor="#585e60" />
      </linearGradient>
      <linearGradient id="shoulder" gradientUnits="userSpaceOnUse" x1="0" y1="200" x2="0" y2="780">
        <stop offset="0" stopColor="#50585a" stopOpacity=".85" />
        <stop offset=".6" stopColor="#50585a" stopOpacity=".5" />
        <stop offset="1" stopColor="#50585a" stopOpacity="0" />
      </linearGradient>
      <linearGradient id="foot" gradientUnits="userSpaceOnUse" x1="0" y1="1050" x2="0" y2="1660">
        <stop offset="0" stopColor="#4d5458" stopOpacity="0" />
        <stop offset=".5" stopColor="#4d5458" stopOpacity=".4" />
        <stop offset="1" stopColor="#4d5458" stopOpacity=".7" />
      </linearGradient>
      <linearGradient id="collar" gradientUnits="userSpaceOnUse" x1="340" y1="0" x2="860" y2="0">
        <stop offset="0" stopColor="#667075" />
        <stop offset=".3" stopColor="#858e92" />
        <stop offset=".75" stopColor="#687073" />
        <stop offset="1" stopColor="#3d4244" />
      </linearGradient>
      <filter id="soften" x="-50%" y="-20%" width="200%" height="140%">
        <feGaussianBlur stdDeviation="22" />
      </filter>
      <clipPath id="bottleShape"><path d={outline} /></clipPath>
      <clipPath id="lowerShape"><path d={lowerDecal} /></clipPath>
    </defs>
    <g transform="translate(820 330) scale(.333333)" fill="none" strokeWidth="3" shapeRendering="crispEdges">
      <g clipPath="url(#bottleShape)" stroke="none">
        <path d="M0 0H900V1700H0Z" fill="url(#skin)" />
        <path d="M300 200H900V780H300Z" fill="url(#shoulder)" />
        <path d="M0 1050H900V1700H0Z" fill="url(#foot)" />
        <path d={seam + "L800 1700L900 255Z"} fill="#555b5d" opacity=".6" filter="url(#soften)" />
        <path d={rightEdge} stroke="#25292a" strokeWidth="62" opacity=".85" filter="url(#soften)" />
        <path d="M335 60H900V252L788 257C650 265 480 280 335 303Z" fill="url(#collar)" />
        <path d="M112 1555C200 1620 380 1645 525 1650L590 1640 600 1700H100Z" fill="#25292b" />
      </g>
      <path d={upperDecal} fill="#5b6096" />
      <path d={lowerDecal} fill="#6f76b6" />
      <g fill="#5f6694" clipPath="url(#lowerShape)">
        <path d="M120 1080 190 1200 260 1280 400 1290 600 1200V1400H120Z" opacity=".45" />
      </g>
      <path
        d="M478 575 500 562 520 575 532 558 545 580 565 572 572 600 592 570 600 602 580 612 560 600 540 612 510 605 490 605ZM612 612 625 600 628 620ZM478 650 495 655 515 645 530 658 552 655 550 690 535 685 520 698 500 690 485 695 470 680Z"
        fill="#666da8"
      />
      <path
        d="M372 320 380 350 372 375 365 350ZM402 325 410 380 418 440 402 470 388 440 395 380ZM442 340 446 380 440 430ZM360 460 380 470 372 495ZM420 460 448 455 445 480 425 490ZM530 400 538 410 530 425ZM565 440 578 455 565 480ZM400 480 410 500 398 520Z"
        fill="#6d7478"
      />
      <g fill="#838d90" clipPath="url(#lowerShape)">
        <path d="M250 790 300 740 315 760 300 800 320 745 330 760 305 850 290 870 285 930 262 950 270 975 290 970 300 990 250 1020 262 1000 240 980 245 1010 225 1060 235 1100 250 1120 258 1160 235 1180 240 1210 215 1180 220 1280 212 1300 195 1230 175 1260 168 1210 180 1180 150 1155 165 1100 178 1050 200 1000 215 950 215 900Z" />
        <path d="M335 735 350 740 365 790 350 800 340 770ZM375 725 395 735 380 775ZM410 700 420 740 400 740ZM440 700 455 730 430 740ZM330 1010 338 1015 320 1105ZM385 1040 395 1045 365 1150ZM495 1115 500 1130 492 1150ZM550 1120 562 1160 535 1150ZM415 1190 426 1205 418 1220ZM482 1195 490 1215 482 1230ZM530 1215 548 1205 540 1240 525 1230ZM400 1265 410 1275 400 1320ZM465 1260 472 1290 462 1300ZM330 1320 335 1350 325 1350ZM160 965 178 950 165 1000Z" />
      </g>
      <path d="M215 1105 245 1100 250 1118 220 1122ZM240 1020 265 1008 275 1045 245 1055ZM300 780 312 770 290 860ZM215 850 235 830 222 880Z" fill="#6a72b0" />
      <g stroke="#22272a">
        <path d="M360 122 810 72V112M362 150 755 88V108L362 170M342 156 360 151M345 167 820 100M346 186 570 155M350 178 655 118M350 200 836 122M372 204 838 134M372 212 840 153M370 228 822 170M343 243C500 212 700 185 848 184M336 290C440 255 600 215 790 200L856 198M335 303C480 280 650 265 788 257L856 253M570 170V190L655 182V165L570 170M655 165 705 165V178M697 98V115L653 120V107" />
        <path d={seam} />
        <path d="M118 1553C180 1600 330 1640 430 1645C470 1650 500 1648 525 1648L575 1643" />
        <path d="M275 748C200 860 128 1010 128 1130" />
        <path d="M600 480C625 520 637 545 637 580C635 605 628 620 613 635M525 705 555 688M562 680 572 673M487 723 495 720" />
        <path d="M372 500C400 530 440 545 465 575L482 612" />
      </g>
      <g stroke="#3f3bdc">
        <path d="M372 500C350 420 343 350 345 310C355 298 385 298 410 310C470 345 530 390 570 435L600 480" />
        <path d="M375 368C385 355 430 370 460 390C500 420 540 470 541 488C540 500 520 490 500 478C470 460 440 468 420 475C400 478 375 450 370 420C366 390 368 378 375 368Z" />
        <path d="M372 500C400 530 440 545 465 575L482 612" strokeDasharray="5 6" />
        <path d="M600 480C625 520 637 545 637 580" strokeDasharray="5 6" />
        <path d="M475 655C470 680 445 690 420 695C380 705 340 705 320 715C270 750 210 850 180 910C145 980 128 1060 128 1130C128 1230 180 1310 250 1335C330 1360 420 1355 480 1310C540 1280 580 1220 580 1160C578 1110 530 1085 480 1067C430 1045 390 1042 345 1010C310 980 302 930 305 890C310 850 325 810 350 795C380 770 420 755 470 735" />
        <path d="M214 960C215 1010 225 1060 270 1095C310 1120 350 1108 380 1113C420 1120 452 1150 452 1185C450 1230 400 1270 340 1276C280 1280 230 1250 205 1200C180 1150 180 1040 214 960Z" />
        <path d="M772 450C740 520 705 570 697 610C695 640 698 660 704 685M740 1033C741 1050 725 1080 715 1100C707 1130 706 1160 706 1300C722 1250 732 1200 736 1140" />
      </g>
      <g stroke="#22272a" strokeDasharray="5 6">
        <path d="M320 715C270 750 210 850 180 910C145 980 128 1060 128 1130C128 1230 180 1310 250 1335M480 1310C540 1280 580 1220 580 1160C578 1110 530 1085 480 1067C430 1045 390 1042 345 1010" />
      </g>
      <path d="M115 1555C115 1580 160 1610 260 1640C330 1660 420 1668 500 1673C560 1670 575 1660 578 1645" stroke="#4a9be0" />
    </g>
    <g strokeWidth="1" fill="none">
      <path d="M894 581 876 575" stroke="#54dcf5" />
      <path d="M894 581 898 559" stroke="#3bde45" />
      <path d="M894 581 878 582.500" stroke="#cf3035" />
    </g>
    <circle cx="876" cy="575" r="1.500" fill="#54dcf5" />
    <circle cx="898" cy="558" r="2.500" fill="#2fe53a" />
    <circle cx="878" cy="582.500" r="3" fill="#f02f34" />
  </Scene>
);

const viewTools: [string, string][] = [
  ["refit", "Refit"], ["zoomIn", "Zoom In"], ["zoomOut", "Zoom Out"], ["repaint", "Repaint"], ["cube", "Display Style"],
  ["views", "Saved Orientations"], ["camera", "View Manager"], ["datumDisp", "Datum Display"], ["annot", "Annotation Display"], ["spin", "Spin Center"],
];
const toolMenus = ["cube", "views", "datumDisp"];

/* ---------- status bar ---------- */

const StatusBar = styled.footer`
  display: flex;
  align-items: center;
  height: 34px;
  padding: 0 18px 0 6px;
  border-top: 2px solid #93939c;
  border-bottom: 2px solid #30343a;
  background: #eeeff1;
`;
const StatusButton = styled.button<{ $on?: boolean }>`
  display: flex;
  align-items: center;
  justify-content: center;
  width: 22px;
  height: 22px;
  margin-right: 4px;
  border: 1px solid ${(p) => (p.$on ? "#9b9ca2" : "#c9cace")};
  background: ${(p) => (p.$on ? "#e3e4e7" : "#f7f7f8")};
`;
const StatusRule = styled.i<{ $before?: number; $after: number }>`
  width: 1px;
  height: 24px;
  margin: 0 ${(p) => p.$after}px 0 ${(p) => p.$before ?? 0}px;
  background: #cbccd0;
`;
const Bullet = styled.i<{ $c: string; $d: number }>`
  flex: none;
  width: ${(p) => p.$d}px;
  height: ${(p) => p.$d}px;
  border-radius: 50%;
  background: ${(p) => p.$c};
`;
const Message = styled.span`
  flex: 1;
  margin-left: 5px;
  white-space: nowrap;
`;
const Lights = styled.div`
  display: flex;
  align-items: center;
  gap: 2px;
  width: 31px;
`;
const FindButton = styled.button`
  display: flex;
  align-items: center;
  justify-content: center;
  width: 40px;
  height: 22px;
  margin-right: 2px;
  border: 1px solid #b9bac0;
  border-radius: 2px;
  background: linear-gradient(#fdfdfd, #e4e5e8);
`;
const FilterBox = styled.label`
  display: flex;
  align-items: center;
  width: 154px;
  height: 21px;
  margin-left: 97px;
  border: 1px solid #bfc0c5;
  background: linear-gradient(#fff, #f1f1f3);
  select { flex: 1; height: 19px; padding: 0 5px; appearance: none; outline: 0; }
  i { border-width: 5px 4px 0; margin: 0 3px; }
`;
const FilterRule = styled.b`
  width: 1px;
  height: 19px;
  background: ${color.line};
`;

/* ---------- desktop task bar ---------- */

const TaskBar = styled.div`
  display: flex;
  align-items: center;
  height: 39px;
  border-top: 1px solid #7fb4dd;
  background: linear-gradient(90deg, #1c548c 0, #1e639b 60px, #2c7ea8 110px, #2a88c6 150px, #2b8acb 240px, #3d9bd0 380px, #3c9bd0 490px, #3390cc 560px, #2d86c8 700px, #2279bd 860px, #2379c2 960px, #1e6fb3 1060px, #2c78bd 1100px, #1f66ae 1200px, #1b5ca6 1300px, #1e62a8 1390px, #1f4c80 1415px, #193d6d 1680px);
  position: relative;
`;
const Sheen = styled.svg`
  position: absolute;
  left: 0;
  top: 0;
`;
const StartButton = styled.button`
  width: 60px;
  padding-left: 8px;
  position: relative;
`;
const Task = styled.button<{ $open?: boolean; $green?: boolean }>`
  display: flex;
  align-items: center;
  justify-content: center;
  width: 58px;
  height: 38px;
  margin-right: 4px;
  position: relative;
  ${(p) =>
    p.$open &&
    css`
      border: 1px solid #dff1fb;
      outline: 1px solid #16405f;
      outline-offset: 0;
      border-radius: 2px;
      background: ${p.$green
        ? "linear-gradient(110deg, #b9e6b4 0, #8fb48a 40%, #6fe45c 75%, #66dd5a)"
        : "linear-gradient(115deg, #b0d3e9 0, #7bb6da 45%, #4fa3d3)"};
    `}
`;
const Tray = styled.div`
  display: flex;
  flex: 1;
  align-items: center;
  justify-content: flex-end;
  gap: 8px;
  position: relative;
`;
const Clock = styled.time`
  width: 68px;
  margin-left: 6px;
  text-align: center;
  font-family: "Open Sans", "Noto Sans", sans-serif;
  font-size: 11px;
  line-height: 17px;
  color: #fff;
`;
const ShowDesktop = styled.button`
  width: 13px;
  height: 38px;
  border: 1px solid #86a6c6;
  background: linear-gradient(120deg, #567ba3, #1f3f66);
`;

const Orb = () => (
  <svg width="38" height="38" viewBox="0 0 38 38">
    <defs>
      <radialGradient id="orb" cx=".5" cy=".9" r=".9">
        <stop offset="0" stopColor="#4fd6f5" />
        <stop offset=".45" stopColor="#1d6fa8" />
        <stop offset=".8" stopColor="#123f6b" />
        <stop offset="1" stopColor="#8fb0c8" />
      </radialGradient>
    </defs>
    <circle cx="19" cy="19" r="18" fill="url(#orb)" stroke="#0d3557" />
    <path d="M4 15A15.500 15.500 0 0 1 34 15C26 19 12 19 4 15Z" fill="#fff" opacity=".35" />
    <path d="M10 11c3-2 5-2 8 0l-1.500 8c-3-2-5-2-8 0z" fill="#ef5a24" />
    <path d="M20 12c3 2 5 2 9 0l-2 8c-3 2-5 2-8 0z" fill="#86c440" />
    <path d="M8.500 20.500c3-2 5-2 8 0l-2 7c-2-2-5-2-7 0z" fill="#46a8e8" />
    <path d="M18.500 21c3 2 5 2 8 0l-2 7c-2 2-5 2-8 0z" fill="#fcc72d" />
  </svg>
);
const Explorer = () => (
  <svg width="32" height="30" viewBox="0 0 32 30">
    <path d="M1 4 6 1h20l4 4v22H1z" fill="#e8d48a" stroke="#b79c4c" />
    <path d="M4 3h9l1 4h14l2 2v18H2z" fill="#f8eeb4" />
    <path d="M5 2h3v3H5z" fill="#3fa657" />
    <path d="M14 4h4v2h-4z" fill="#d4552f" />
    <path d="M21 6h4v2h-4z" fill="#3c82c6" />
    <path d="M2 10h28" stroke="#dcc471" />
    <path d="M6 29v-8c0-2 1-3 3-3h15c2 0 3 1 3 3v8h-5v-5H11v5z" fill="#9dd4f1" stroke="#e8f7ff" />
  </svg>
);
const Explore = () => (
  <svg width="32" height="32" viewBox="0 0 32 32">
    <path d="M28 21c-2 5-6 8-11 8-7 0-12-5-12-12S10 5 17 5s12 5 11 13H11c0 4 3 6 6 6 2 0 4-1 5-3zM11 14h11c0-3-2-5-5-5s-6 2-6 5z" fill="#8bdcfb" stroke="#4aaee0" strokeWidth=".700" />
    <path d="M5 29C-3 27 6 9 18 3c7-3 13-2 10 6" fill="none" stroke="#f0c42c" strokeWidth="2.800" />
  </svg>
);
const Player = () => (
  <svg width="28" height="28" viewBox="0 0 28 28">
    <path d="M2 3h20v22H2z" fill="#8fbddb" stroke="#c5dfee" />
    <path d="M24 3v22M27 4v20" stroke="#bddcef" />
    <circle cx="12" cy="14" r="9" fill="#e86a1e" stroke="#f6b17c" />
    <path d="m9 8 9 6-9 6z" fill="#fff" />
  </svg>
);
const Chrome = () => (
  <svg width="30" height="30" viewBox="0 0 30 30">
    <circle cx="15" cy="15" r="14" fill="#3aa757" />
    <path d="M15 15 3 8A14 14 0 0 1 27.500 9z" fill="#d93a2b" />
    <path d="M15 9h12.800A14 14 0 0 1 14 29l7-11z" fill="#f9d02f" />
    <path d="M3 8 15 9v6z" fill="#d93a2b" />
    <circle cx="15" cy="15" r="6.500" fill="#f4f4f4" />
    <circle cx="15" cy="15" r="5" fill="#3a7bc8" />
  </svg>
);
const CreoTask = () => (
  <svg width="32" height="34" viewBox="0 0 30 32">
    <path d="M0 0h30v32H0z" fill="#dfe6dc" stroke="#f5f8f3" />
    <path d="M0 32 4 28h22l4 4z" fill="#b9c4b5" />
    <path d="M5 6h20v19H5z" fill="#b4cc3a" stroke="#464a2a" />
    <path d="M12 6h13v13H12z" fill="#5fc6de" stroke="#464a2a" />
    <path d="M5 19h7v6H5z" fill="#a4bd36" />
  </svg>
);

const trayIcons = ["usb", "pdf", "xTray", "shield", "display", "network", "volume"];

export default function App() {
  return (
    <Window>
      <Global />
      <TitleBar>
        <QuickBar>
          <QuickButton aria-label="Creo"><Icon name="creo" /></QuickButton>
          <QuickRule />
          <QuickButton aria-label="New"><Icon name="page" /></QuickButton>
          <QuickButton aria-label="Open"><Icon name="open" /></QuickButton>
          <QuickButton aria-label="Save"><Icon name="save" /></QuickButton>
          <QuickButton aria-label="Undo"><Icon name="undo" /></QuickButton>
          <QuickButton $narrow aria-label="Undo list"><Caret /></QuickButton>
          <QuickButton aria-label="Redo"><Icon name="redo" /></QuickButton>
          <QuickButton $narrow aria-label="Redo list"><Caret /></QuickButton>
          <QuickButton aria-label="Regenerate"><Icon name="regen" /></QuickButton>
          <QuickButton aria-label="Windows"><Icon name="windows" /></QuickButton>
          <QuickButton $narrow aria-label="Window list"><Caret /></QuickButton>
          <QuickButton aria-label="Close file"><Icon name="folderUp" /></QuickButton>
          <QuickRule />
          <QuickButton aria-label="Customize"><Icon name="more" /></QuickButton>
        </QuickBar>
        <Title>P1001_BOTTLE_BODY (Active) C:\Users\ezympc\Downloads\CREO 8\p1001_bottle_body.prt.33 - Creo Parametric Academic Edition</Title>
        <WindowButtons>
          <button aria-label="Minimize"><Icon name="minimize" /></button>
          <button aria-label="Restore"><Icon name="restore" /></button>
          <button aria-label="Close"><Icon name="close" /></button>
        </WindowButtons>
      </TitleBar>
      <TabRow>
        <Tabs>
          <FileTab>File <Caret /></FileTab>
          <Tab $active>Model</Tab>
          {["Analysis", "Annotate", "Render", "Tools", "View", "Flexible Modeling", "Applications", "Plastics Advisor"].map((t) => (
            <Tab key={t}>{t}</Tab>
          ))}
        </Tabs>
        <SearchArea onSubmit={(e) => e.preventDefault()}>
          <PlainButton type="button" aria-label="Minimize the ribbon"><Icon name="collapse" /></PlainButton>
          <SearchInput aria-label="Search commands" />
          <SearchButton aria-label="Search"><Icon name="search" /></SearchButton>
          <PlainButton type="button" aria-label="Learning"><Icon name="learn" /></PlainButton>
          <PlainButton type="button" $w={18} aria-label="Learning menu"><Caret /></PlainButton>
          <PlainButton type="button" aria-label="Help"><Icon name="help" /></PlainButton>
        </SearchArea>
      </TabRow>
      <Ribbon>
        {groups.map((g) => (
          <RibbonGroup key={g.name} spec={g} />
        ))}
      </Ribbon>
      <Workspace>
        <ModelTree />
        <Viewport>
          <Bottle />
          <ViewBar>
            {viewTools.map(([icon, label]) => (
              <ViewButton key={icon} $on={icon === "spin"} $menu={toolMenus.includes(icon)} aria-label={label}>
                <Icon name={icon} />
              </ViewButton>
            ))}
          </ViewBar>
          <Note>I have converted the sketch into a surface using style</Note>
        </Viewport>
      </Workspace>
      <StatusBar>
        <StatusButton $on aria-label="Toggle tree"><Icon name="treeStatus" /></StatusButton>
        <StatusButton aria-label="Toggle browser"><Icon name="globe" /></StatusButton>
        <StatusRule $before={4} $after={7} />
        <Bullet $c="#1212d8" $d={5} />
        <Message>Part 'P1001_BOTTLE_BODY' not changed since last regen.</Message>
        <StatusRule $after={35} />
        <StatusRule $after={4} />
        <Lights>
          <Bullet $c="#45cc40" $d={10} />
          <Bullet $c="#cbccd0" $d={6} />
          <Bullet $c="#cbccd0" $d={6} />
        </Lights>
        <FindButton aria-label="Find"><Icon name="binoculars" /></FindButton>
        <StatusRule $after={0} />
        <FilterBox>
          <select aria-label="Selection filter" defaultValue="Smart">
            <option>Smart</option>
          </select>
          <FilterRule />
          <Caret as="i" />
        </FilterBox>
      </StatusBar>
      <TaskBar>
        <Sheen width="1300" height="38" viewBox="0 0 1300 38" aria-hidden="true">
          <path d="M95 38 130 0h18L115 38z" fill="#8fd0c0" opacity=".25" />
          <path d="M830 0h70l25 38h-75zM1070 0h100l20 38h-100z" fill="#5b9ad2" opacity=".3" />
          <path d="M1216 -2C1232 10 1246 24 1256 40" fill="none" stroke="#a9cff0" strokeWidth="9" />
        </Sheen>
        <StartButton aria-label="Start"><Orb /></StartButton>
        <Task aria-label="Internet Explorer"><Explore /></Task>
        <Task $open aria-label="Explorer"><Explorer /></Task>
        <Task aria-label="Media Player"><Player /></Task>
        <Task $open aria-label="Chrome"><Chrome /></Task>
        <Task $open $green aria-label="Creo Parametric"><CreoTask /></Task>
        <Tray>
          {trayIcons.map((t) => (
            <Icon key={t} name={t} />
          ))}
          <Clock>13:21<br />03/11/2013</Clock>
          <ShowDesktop aria-label="Show desktop" />
        </Tray>
      </TaskBar>
      <Markup viewBox="0 0 1680 1050" preserveAspectRatio="xMinYMax meet" aria-hidden="true">
        <path d="M535 820 99 938M116 903 99 938 129 956" fill="none" stroke={color.note} strokeWidth="5" strokeLinecap="round" strokeLinejoin="round" />
      </Markup>
    </Window>
  );
}
